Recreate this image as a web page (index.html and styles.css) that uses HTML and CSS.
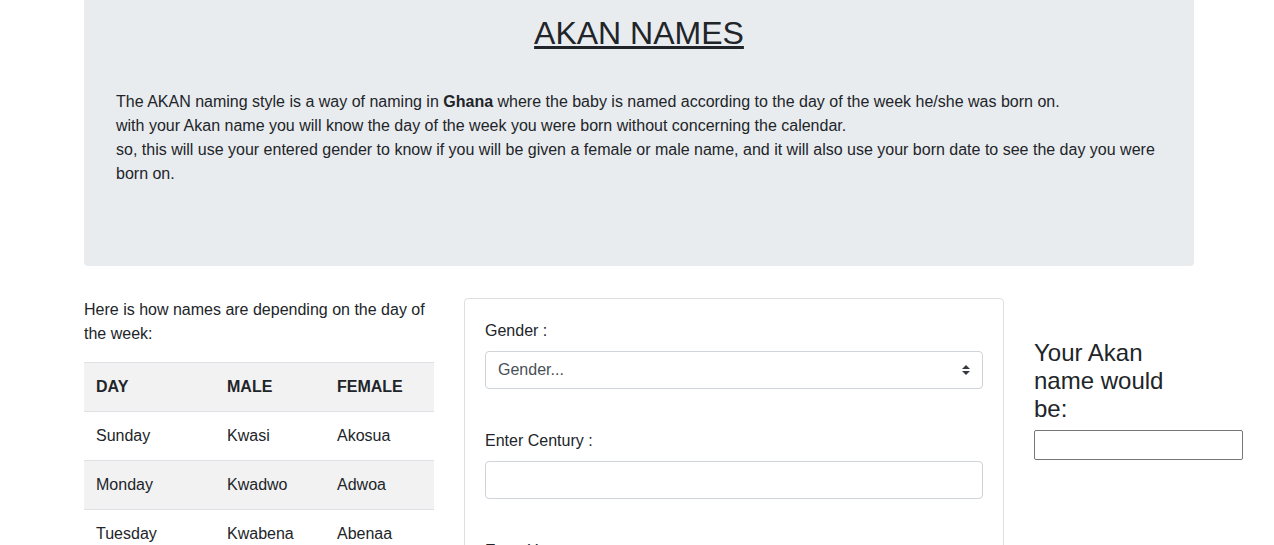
FILE: index.html
```html
<!DOCTYPE html>
<html lang="en">
<head>
<meta charset="utf-8">
<title>Akan Names</title>
<link rel="stylesheet" href="styles.css">
</head>
<body>
<div class="container">
  <header class="jumbotron">
    <h1 class="title"><u>AKAN NAMES</u></h1>
    <p class="intro">The AKAN naming style is a way of naming in <b>Ghana</b> where the baby is named according to the day of the week he/she was born on.<br>with your Akan name you will know the day of the week you were born without concerning the calendar.<br>so, this will use your entered gender to know if you will be given a female or male name, and it will also use your born date to see the day you were born on.</p>
  </header>

  <div class="row">
    <div class="col-left">
      <p class="lead-text">Here is how names are depending on the day of the week:</p>
      <table class="names-table">
        <tbody>
          <tr><th>DAY</th><th>MALE</th><th>FEMALE</th></tr>
          <tr><td>Sunday</td><td>Kwasi</td><td>Akosua</td></tr>
          <tr><td>Monday</td><td>Kwadwo</td><td>Adwoa</td></tr>
          <tr><td>Tuesday</td><td>Kwabena</td><td>Abenaa</td></tr>
          <tr><td>Wednesday</td><td>Kwaku</td><td>Akua</td></tr>
          <tr><td>Thursday</td><td>Yaw</td><td>Yaa</td></tr>
          <tr><td>Friday</td><td>Kofi</td><td>Afua</td></tr>
          <tr><td>Saturday</td><td>Kwame</td><td>Ama</td></tr>
        </tbody>
      </table>
    </div>

    <div class="col-mid">
      <form class="card">
        <div class="form-group">
          <label class="label" for="gender">Gender :</label>
          <div class="select-wrap">
            <select id="gender" class="form-select">
              <option>Gender...</option>
              <option>Male</option>
              <option>Female</option>
            </select>
            <svg class="select-arrow" width="8" height="10" viewBox="0 0 4 5"><path fill="#343a40" d="M2 0L0 2h4zm0 5L0 3h4z"/></svg>
          </div>
        </div>
        <div class="form-group">
          <label class="label" for="century">Enter Century :</label>
          <input id="century" class="form-control" type="text">
        </div>
        <div class="form-group">
          <label class="label" for="year">Enter Year :</label>
          <input id="year" class="form-control" type="text">
        </div>
      </form>
    </div>

    <div class="col-right">
      <h4 class="result-title">Your Akan name would be:</h4>
      <input class="result-input" type="text">
    </div>
  </div>
</div>
</body>
</html>
```
FILE: styles.css
```css
* { box-sizing: border-box; }

html, body {
  margin: 0;
  padding: 0;
}

body {
  font-family: "Liberation Sans", Arial, sans-serif;
  font-size: 16px;
  line-height: 24px;
  color: #212529;
  background: #fff;
}

.container {
  width: 1110px;
  margin-left: 84px;
}

.jumbotron {
  background: #e9ecef;
  border-radius: 0 0 4px 4px;
  padding: 14px 32px 64px;
  margin-bottom: 32px;
}

.title {
  margin: 0;
  font-size: 32px;
  font-weight: 400;
  line-height: 38px;
  text-align: center;
}

.intro {
  margin: 38px 0 16px;
}

.intro b { font-weight: 700; }

.row {
  display: flex;
  gap: 30px;
  align-items: flex-start;
}

.col-left { width: 350px; flex: none; }
.col-mid { width: 540px; flex: none; }
.col-right { width: 160px; flex: none; }

.lead-text {
  margin: 0 0 16px;
}

.names-table {
  width: 350px;
  border-collapse: collapse;
}

.names-table th,
.names-table td {
  padding: 12px 11px 12px 12px;
  border-top: 1px solid #dee2e6;
  text-align: left;
  vertical-align: top;
  line-height: 24px;
}

.names-table th { font-weight: 700; }
.names-table th:nth-child(1), .names-table td:nth-child(1) { width: 131px; }
.names-table th:nth-child(2), .names-table td:nth-child(2) { width: 110px; }

.names-table tr:nth-child(odd) { background: #f2f2f2; }

.card {
  border: 1px solid rgba(0,0,0,.125);
  border-radius: 4px;
  padding: 20px 20px 20px;
}

.form-group { margin-bottom: 40px; }

.label {
  display: block;
  margin-bottom: 8px;
}

.select-wrap { position: relative; }

.form-select,
.form-control {
  display: block;
  width: 100%;
  height: 38px;
  padding: 6px 12px;
  font-family: inherit;
  font-size: 16px;
  line-height: 24px;
  color: #495057;
  background: #fff;
  border: 1px solid #ced4da;
  border-radius: 4px;
  -webkit-appearance: none;
  appearance: none;
}

.form-select { padding-right: 36px; }

.select-arrow {
  position: absolute;
  right: 13px;
  top: 14px;
  pointer-events: none;
}

.result-title {
  margin: 41px 0 7px;
  font-size: 24px;
  font-weight: 400;
  line-height: 28px;
}

.result-input {
  display: block;
  width: 209px;
  height: 30px;
  border: 1px solid #767676;
  border-radius: 2px;
  padding: 1px 2px;
  font-size: 16px;
}
```
